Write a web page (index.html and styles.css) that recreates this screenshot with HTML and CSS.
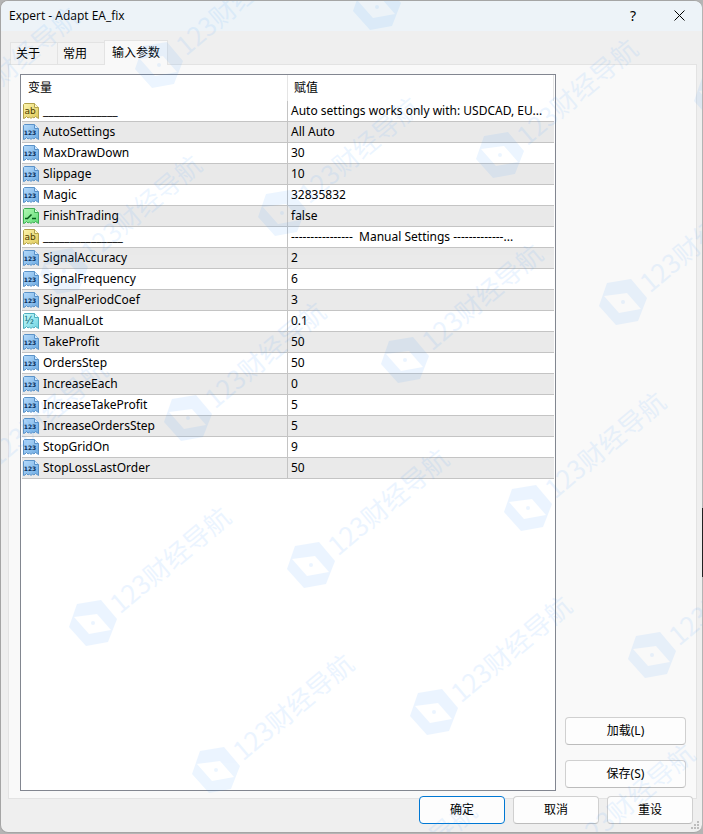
FILE: index.html
```html
<!DOCTYPE html>
<html lang="zh-CN">
  <head>
    <meta charset="utf-8">
    <title>Expert - Adapt EA_fix</title>
    <link rel="stylesheet" href="styles.css">
  </head>
  <body>
    <svg class="defs" aria-hidden="true">
      <defs>
        <linearGradient id="gBlue" x1="0" y1="0" x2="1" y2="1"><stop offset="0" stop-color="#b5dafb"/><stop offset="1" stop-color="#6eabe2"/></linearGradient>
        <linearGradient id="gYellow" x1="0" y1="0" x2="1" y2="1"><stop offset="0" stop-color="#fdf5ae"/><stop offset="1" stop-color="#dfc95a"/></linearGradient>
        <linearGradient id="gGreen" x1="0" y1="0" x2="1" y2="1"><stop offset="0" stop-color="#b4f8b4"/><stop offset="1" stop-color="#5fdc76"/></linearGradient>
        <linearGradient id="gCyan" x1="0" y1="0" x2="1" y2="1"><stop offset="0" stop-color="#c8fafa"/><stop offset="1" stop-color="#70d3e2"/></linearGradient>
        <path id="note" d="M.5 1.5 1.5.5H11.5L15.5 4.5V15.5L14 14.5 12.500 13.500 11 15 9.500 14 8 15.500 6.500 14 5 15 3.500 13.500 2 15 .5 15.500Z"/>
        <path id="fold" d="M11.500.5V4.500H15.500"/>
        <symbol id="int" viewBox="0 0 16 16">
          <use href="#note" fill="url(#gBlue)" stroke="#5a92c8"/>
          <use href="#fold" fill="#d4eaff" stroke="#5a92c8"/>
          <text x="7" y="11" text-anchor="middle" font-size="6" font-weight="bold" fill="#082f5c">123</text>
        </symbol>
        <symbol id="string" viewBox="0 0 16 16">
          <use href="#note" fill="url(#gYellow)" stroke="#b3a24c"/>
          <use href="#fold" fill="#fff9cc" stroke="#b3a24c"/>
          <text x="7" y="11" text-anchor="middle" font-size="9" fill="#4d4000">ab</text>
        </symbol>
        <symbol id="bool" viewBox="0 0 16 16">
          <use href="#note" fill="url(#gGreen)" stroke="#3fae55"/>
          <use href="#fold" fill="#d8ffdc" stroke="#3fae55"/>
          <path d="M2 10.500H4.500L8.500 6.500M9 10.500H13" fill="none" stroke="#075c1a" stroke-width="1.500"/>
        </symbol>
        <symbol id="double" viewBox="0 0 16 16">
          <use href="#note" fill="url(#gCyan)" stroke="#4fafbf"/>
          <use href="#fold" fill="#e2ffff" stroke="#4fafbf"/>
          <text x="6" y="11" text-anchor="middle" font-size="10" fill="#0d6674">½</text>
        </symbol>
        <g id="mark">
          <path fill-rule="evenodd" d="M-16-19 8-23 24-4 15 19-7 23-24 4ZM-19-6-4 11 18 7 4-9ZM-2 0a2 2 0 1 0 4 0a2 2 0 1 0-4 0Z"/>
          <text x="26" y="11" transform="rotate(-40)">123财经导航</text>
        </g>
      </defs>
    </svg>

    <main class="dialog">
      <header class="titlebar">
        <h1>Expert - Adapt EA_fix</h1>
        <button class="tool" aria-label="Help">?</button>
        <button class="tool" aria-label="Close">
          <svg width="11" height="11" viewBox="0 0 11 11"><path d="M.5.5l10 10M10.500.5l-10 10" stroke="#000" fill="none"/></svg>
        </button>
      </header>

      <nav class="tabs">
        <button>关于</button>
        <button>常用</button>
        <button class="active">输入参数</button>
      </nav>

      <section class="panel">
        <div class="list">
          <table>
            <thead>
              <tr><th>变量</th><th>赋值</th></tr>
            </thead>
            <tbody id="params"></tbody>
          </table>
        </div>
        <div class="side">
          <button class="btn">加载(L)</button>
          <button class="btn">保存(S)</button>
        </div>
      </section>

      <footer class="actions">
        <button class="btn primary">确定</button>
        <button class="btn">取消</button>
        <button class="btn">重设</button>
      </footer>

      <svg class="grip" width="8" height="8" viewBox="0 0 8 8" aria-hidden="true">
        <path d="M6 0h2v2h-2zM3 3h2v2h-2zM6 3h2v2h-2zM0 6h2v2h-2zM3 6h2v2h-2zM6 6h2v2h-2z" fill="#bdbdbd"/>
      </svg>
      <svg class="watermark" id="watermark" aria-hidden="true"></svg>
    </main>

    <script src="script.js"></script>
  </body>
</html>
```
FILE: styles.css
```css
* {
  box-sizing: border-box;
}

body {
  margin: 0;
  min-height: 100vh;
  display: flex;
  padding: 0 1px 1px 0;
  background: #b4b4b4 linear-gradient(#222, #222) no-repeat right 0 top 508px / 1px 69px;
  font-family: "Noto Sans", "Noto Sans CJK SC", sans-serif;
  font-size: 12px;
  line-height: 16px;
  color: #000;
}

button {
  font: inherit;
  color: inherit;
}

.defs {
  position: absolute;
  width: 0;
  height: 0;
}

.defs text {
  font-family: "DejaVu Sans", sans-serif;
}

#mark text {
  font-family: "Noto Sans CJK SC", sans-serif;
}

.dialog {
  position: relative;
  flex: 1;
  display: flex;
  flex-direction: column;
  background: #efefef;
  border: 1px solid #a5a5a5;
  border-right: 0;
  border-radius: 8px;
  overflow: hidden;
}

.titlebar {
  display: flex;
  align-items: center;
  height: 30px;
  padding-left: 8px;
  background: #edf3f8;
}

.titlebar h1 {
  flex: 1;
  margin: 0;
  font-family: "Open Sans", sans-serif;
  font-size: 12px;
  font-weight: 400;
}

.tool {
  width: 46px;
  height: 30px;
  padding: 0;
  border: 0;
  background: none;
  font-size: 14px;
}

.tabs {
  display: flex;
  align-items: flex-end;
  height: 33px;
  padding: 0 9px;
}

.tabs button {
  height: 22px;
  padding: 0 17px 0 5px;
  border: 1px solid #e3e3e3;
  border-width: 1px 0 0 1px;
  background: #f3f3f3;
}

.tabs .active {
  position: relative;
  z-index: 1;
  height: 25px;
  margin-bottom: -1px;
  padding: 0 7px;
  border-width: 1px 1px 0;
  background: #f9f9f9;
}

.panel {
  flex: 1;
  display: flex;
  gap: 9px;
  margin: 0 5px 0 7px;
  padding: 9px 10px 7px 11px;
  border: 1px solid #e3e3e3;
  background: #f9f9f9;
}

.list {
  flex: 1;
  min-width: 0;
  padding: 0 1px;
  border: 1px solid #828790;
  background: #fff;
}

table {
  width: 100%;
  table-layout: fixed;
  border-collapse: separate;
  border-spacing: 0;
}

th {
  height: 26px;
  padding: 0 6px;
  border-right: 1px solid #e5e5e5;
  text-align: left;
  font-weight: 400;
}

td {
  height: 21px;
  padding: 0 3px;
  border-bottom: 1px solid #c4c4c4;
  white-space: nowrap;
  overflow: hidden;
}

td:first-child {
  padding: 0 1px;
  border-right: 1px solid #c4c4c4;
}

tbody tr:nth-child(even) {
  background: #eaeaea;
}

.name {
  display: flex;
  align-items: center;
  gap: 4px;
}

.value {
  white-space: pre;
}

.side {
  display: flex;
  flex-direction: column;
  justify-content: flex-end;
  gap: 15px;
  width: 121px;
  padding-bottom: 3px;
}

.btn {
  height: 28px;
  padding: 0;
  border: 1px solid #d0d0d0;
  border-bottom-color: #bcbcbc;
  border-radius: 4px;
  background: #fdfdfd;
}

.primary {
  border-color: #0078d4;
}

.actions {
  position: relative;
  display: flex;
  justify-content: flex-end;
  gap: 8px;
  margin-top: -3px;
  padding: 0 9px 8px;
}

.actions .btn {
  width: 86px;
}

.grip {
  position: absolute;
  right: 3px;
  bottom: 3px;
}

.watermark {
  position: absolute;
  inset: 0;
  z-index: 2;
  width: 100%;
  height: 100%;
  pointer-events: none;
  fill: #2f92ff;
  opacity: 0.09;
  font-size: 26px;
}
```
FILE: script.js
```js
const params = [
  ["string", "______________", "Auto settings works only with: USDCAD, EU..."],
  ["int", "AutoSettings", "All Auto"],
  ["int", "MaxDrawDown", "30"],
  ["int", "Slippage", "10"],
  ["int", "Magic", "32835832"],
  ["bool", "FinishTrading", "false"],
  ["string", "_______________", "----------------  Manual Settings -------------..."],
  ["int", "SignalAccuracy", "2"],
  ["int", "SignalFrequency", "6"],
  ["int", "SignalPeriodCoef", "3"],
  ["double", "ManualLot", "0.1"],
  ["int", "TakeProfit", "50"],
  ["int", "OrdersStep", "50"],
  ["int", "IncreaseEach", "0"],
  ["int", "IncreaseTakeProfit", "5"],
  ["int", "IncreaseOrdersStep", "5"],
  ["int", "StopGridOn", "9"],
  ["int", "StopLossLastOrder", "50"]
];

for (const [type, name, value] of params) {
  const row = document.createElement("tr");
  row.innerHTML = `
    <td><div class="name"><svg width="16" height="16"><use href="#${type}"/></svg>${name}</div></td>
    <td class="value">${value}</td>`;
  document.querySelector("#params").appendChild(row);
}

// watermark centres
const marks = [
  [376, 6], [158, 64], [-60, 122], [717, 96], [499, 154], [281, 212], [63, 270],
  [622, 301], [404, 359], [187, 417], [-31, 475], [527, 507], [310, 564], [92, 622],
  [651, 654], [433, 711], [215, 769], [556, 859], [338, 916]
];

document.querySelector("#watermark").innerHTML = marks
  .map(([x, y]) => `<use href="#mark" x="${x}" y="${y}"/>`)
  .join("");
```
